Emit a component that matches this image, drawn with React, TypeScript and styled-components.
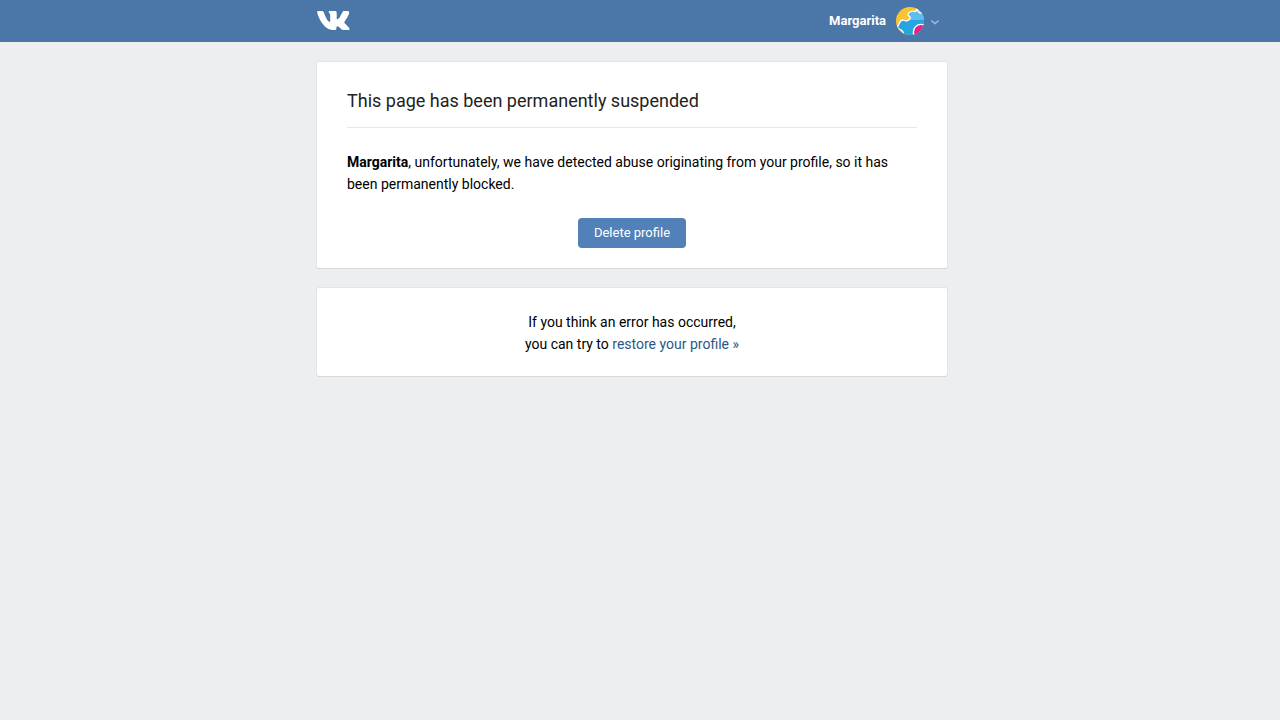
import React from "react";
import styled, { createGlobalStyle } from "styled-components";

const GlobalStyle = createGlobalStyle`
  *, *::before, *::after { box-sizing: border-box; }
  body {
    margin: 0;
    background: #edeef0;
    color: #000;
    font-family: Roboto, "Open Sans", "Liberation Sans", sans-serif;
    font-size: 14px;
    line-height: 22px;
  }
`;

const Header = styled.header`
  background: #4a76a8;
  padding-right: 16px;
`;

const HeaderInner = styled.div`
  display: flex;
  align-items: center;
  justify-content: space-between;
  max-width: 630px;
  height: 42px;
  margin: 0 auto;
`;

const LogoLink = styled.a`
  display: flex;
  color: #fff;
`;

const ProfileButton = styled.button`
  display: flex;
  align-items: center;
  height: 42px;
  padding: 0 8px 0 0;
  border: 0;
  background: none;
  color: #fff;
  font: 700 13px/16px Roboto, "Liberation Sans", sans-serif;
  cursor: pointer;
`;

const Avatar = styled.svg`
  display: block;
  width: 28px;
  height: 28px;
  margin: 0 7px 0 10px;
  border-radius: 50%;
`;

const Chevron = styled.svg`
  display: block;
  width: 8px;
  height: 5px;
  margin-top: 2px;
`;

const Content = styled.main`
  padding: 20px 16px 20px 0;
`;

const Column = styled.div`
  display: flex;
  flex-direction: column;
  gap: 20px;
  max-width: 630px;
  margin: 0 auto;
`;

const Card = styled.section<{ $centered?: boolean }>`
  padding: ${(p) => (p.$centered ? "23px 30px 21px" : "20px 30px")};
  border-radius: 2px;
  background: #fff;
  box-shadow: 0 1px 0 0 #d7d8db, 0 0 0 1px #e3e4e8;
  text-align: ${(p) => (p.$centered ? "center" : "left")};
`;

const Title = styled.h1`
  margin: 0 0 23px;
  padding: 6px 0 14px;
  border-bottom: 1px solid #e7e8ec;
  color: #222;
  font-size: 18px;
  font-weight: 400;
  line-height: 25px;
`;

const Text = styled.p`
  margin: 0;
`;

const Actions = styled.div`
  display: flex;
  justify-content: center;
  margin-top: 23px;
`;

const PrimaryButton = styled.button`
  height: 30px;
  padding: 0 16px 2px;
  border: 0;
  border-radius: 4px;
  background: #5181b8;
  color: #fff;
  font: 400 13px/15px Roboto, "Liberation Sans", sans-serif;
  cursor: pointer;
`;

const TextLink = styled.a`
  color: #2a5885;
  text-decoration: none;
`;

const Logo = () => (
  <svg width="34" height="20" viewBox="0 0 34 20" aria-hidden="true">
    <path
      fill="currentColor"
      d="M16.500 19h1.700c.8 0 1.100-.5 1.100-1.200 0-2.800 1.200-3.300 2.700-1.800l2.100 2.100c.7.700 1.200.9 2.200.9h4.800c1.500 0 1.900-1 1.100-2.100-.8-1.100-2.400-2.700-4.300-4.500-.8-.8-.8-1.200-.1-2.200 1.500-2.100 3.200-4.900 4.100-7.300.6-1.700 0-2.900-1.300-2.900h-3.500c-.9 0-1.300.4-1.700 1.200-1.400 2.900-2.600 5.200-4 6.600-1.100.9-1.700.5-1.700-.9V2.100C19.700.5 19.200 0 17.800 0h-4.900c-.8 0-1.200.4-1.200.9 0 1 1.500 1.200 1.500 3.800v4.700c0 1.200-.2 1.500-.7 1.500-1.500 0-3.800-4.200-5.400-8.800C6.500.5 6 0 4.900 0H1.600C.5 0 .1.500.2 1.400c.3 2 2.300 6.900 5.200 11.100C8.500 17 12.500 19 16.500 19z"
    />
  </svg>
);

const AvatarPicture = () => (
  <Avatar viewBox="0 0 28 28" aria-hidden="true">
    <rect width="28" height="28" fill="#fbc32f" />
    <path
      d="M1 20 5 13 11 14 15 11 12 7 15 4 19 5 21 1 25 6 29 6V30H8L7 25Z"
      fill="#27a5e0"
    />
    <path d="M12 7 15 4 19 5 21 1 25 6 29 6V13H14L15 11Z" fill="#5bbef0" />
    <path
      d="M8 29 7 25Q6 23 3 22 1 21 2 19L4 15Q5 13 7 13L10 14Q15 13 14 10L12 8Q12 6 14 5L17 4Q19 5 20 4L21 1Q22 6 25 6L29 6"
      fill="none"
      stroke="#fff"
      strokeWidth="1.300"
      strokeLinejoin="round"
    />
    <circle cx="25" cy="25" r="7.600" fill="#e91e8c" stroke="#fff" strokeWidth="1.400" />
  </Avatar>
);

export default function App() {
  return (
    <>
      <GlobalStyle />
      <Header>
        <HeaderInner>
          <LogoLink href="#" aria-label="VK">
            <Logo />
          </LogoLink>
          <ProfileButton type="button">
            Margarita
            <AvatarPicture />
            <Chevron viewBox="0 0 8 5" aria-hidden="true">
              <path
                d="M.8.900 4 3.600 7.200.900"
                fill="none"
                stroke="#9bb5d3"
                strokeWidth="1.500"
                strokeLinecap="round"
                strokeLinejoin="round"
              />
            </Chevron>
          </ProfileButton>
        </HeaderInner>
      </Header>
      <Content>
        <Column>
          <Card>
            <Title>This page has been permanently suspended</Title>
            <Text>
              <b>Margarita</b>, unfortunately, we have detected abuse originating from your
              profile, so it has been permanently blocked.
            </Text>
            <Actions>
              <PrimaryButton type="button">Delete profile</PrimaryButton>
            </Actions>
          </Card>
          <Card $centered>
            <Text>
              If you think an error has occurred,
              <br />
              you can try to <TextLink href="#">restore your profile »</TextLink>
            </Text>
          </Card>
        </Column>
      </Content>
    </>
  );
}
